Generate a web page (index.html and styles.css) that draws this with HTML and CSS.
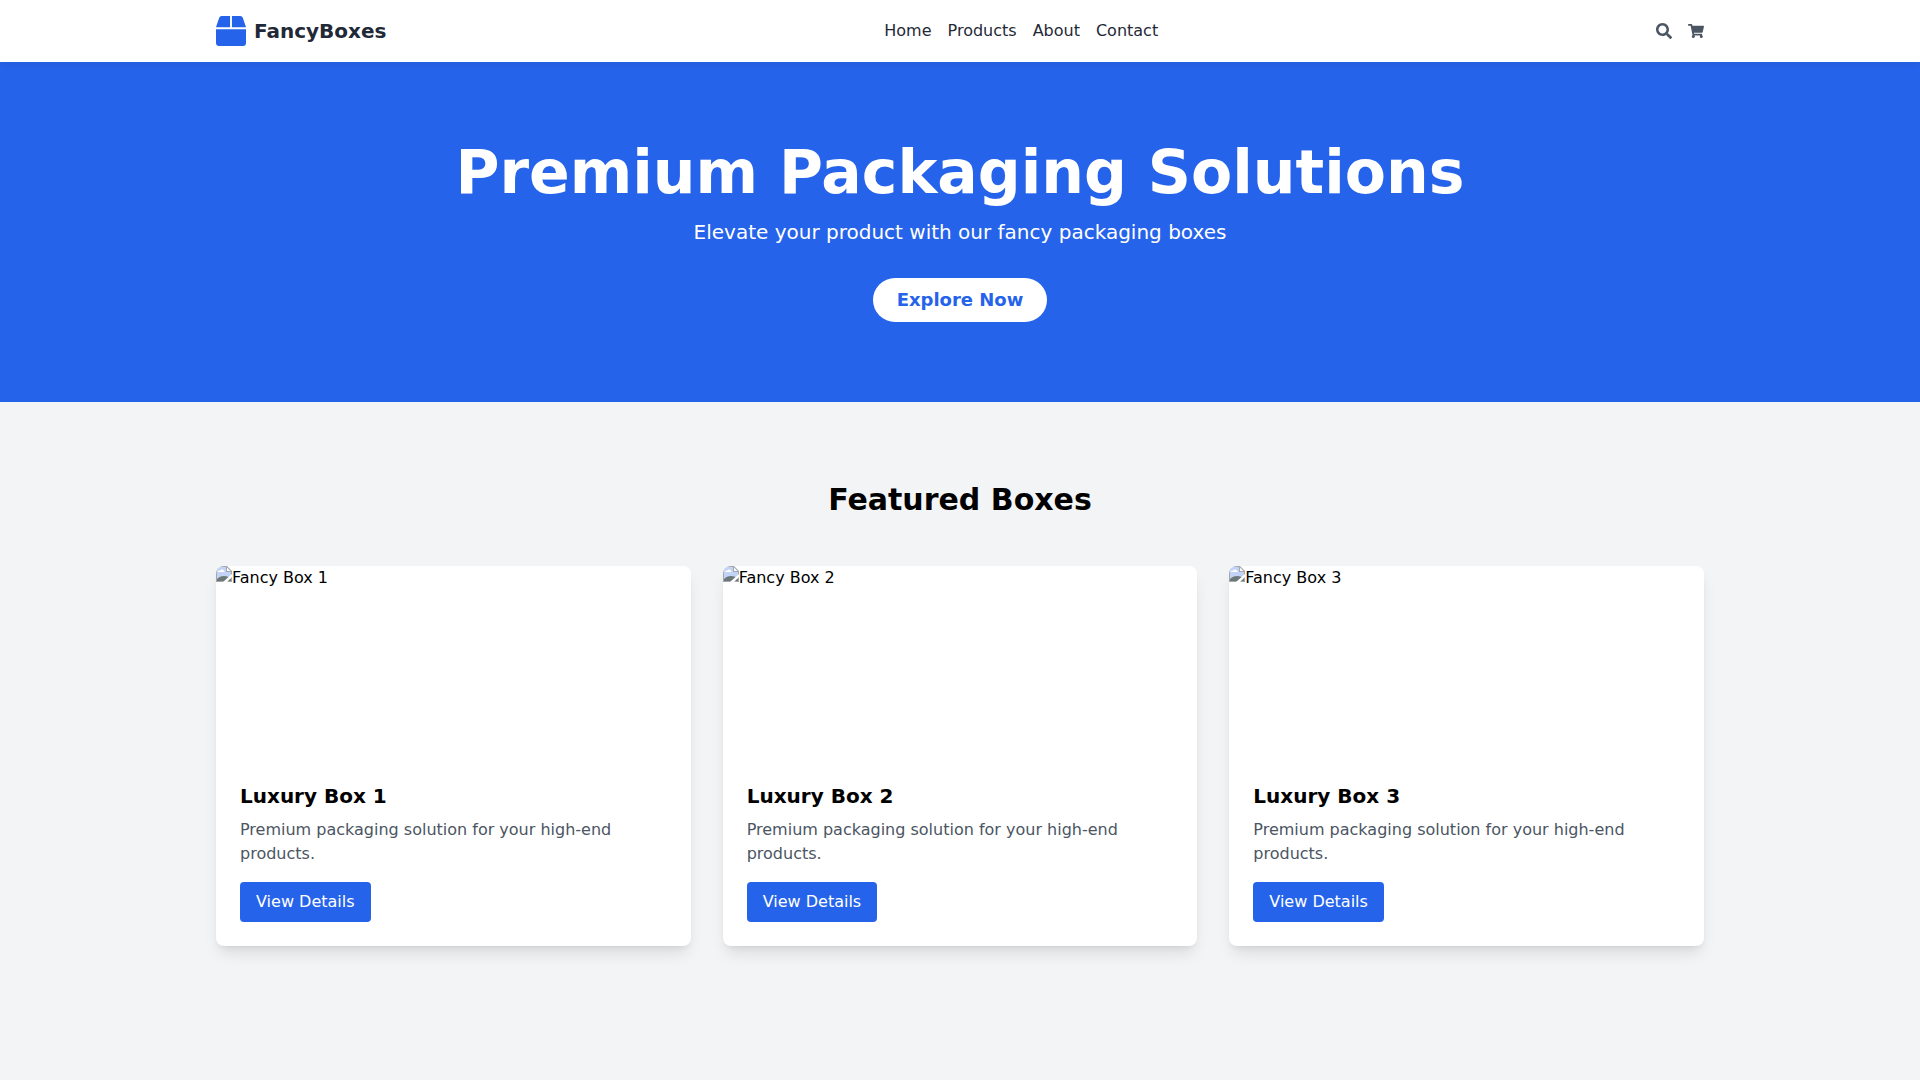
FILE: index.html
```html
<!DOCTYPE html>
<html lang="en">
<head>
  <meta charset="utf-8">
  <meta name="viewport" content="width=device-width, initial-scale=1">
  <title>FancyBoxes</title>
  <link rel="stylesheet" href="styles.css">
</head>
<body>
  <svg class="sprite" aria-hidden="true">
    <symbol id="missing" viewBox="0 0 16 16">
      <path fill="#a3a6aa" d="M0 0h11l5 5v11H0z"/>
      <path fill="#fff" d="M1 1h9v5h5v9H1z"/>
      <path fill="#c3d3f7" d="M1 1h9v5h5v9H1z"/>
      <path fill="#fff" d="M11 1.500V5h3.500z"/>
      <path fill="#fff" d="M2 6c0-1 1-2 2-1 1-2 3-2 4 0 1 0 1 1 0 1H2z"/>
      <path fill="#6c7778" d="M1 15v-2c2-2 4-3 7-3 3 0 5 1 7 3v2z"/>
      <path fill="#fff" d="M7 16l9-8v3l-5 5z"/>
    </symbol>
  </svg>

  <header class="header">
    <div class="container header-row">
      <a class="logo" href="#">
        <svg class="logo-icon" viewBox="0 0 512 512" aria-hidden="true"><path d="M509.500 184.600L458.900 32.800C452.400 13.200 434.100 0 413.400 0H272v192h238.700c-.4-2.500-.4-5-1.200-7.400zM240 0H98.600c-20.700 0-39 13.200-45.500 32.800L2.500 184.600c-.8 2.400-.8 4.900-1.200 7.400H240V0zM0 224v240c0 26.500 21.500 48 48 48h416c26.500 0 48-21.500 48-48V224H0z"/></svg>
        <span>FancyBoxes</span>
      </a>
      <nav class="nav" aria-label="Main">
        <a href="#">Home</a>
        <a href="#">Products</a>
        <a href="#">About</a>
        <a href="#">Contact</a>
      </nav>
      <div class="actions">
        <button class="icon-button" type="button" aria-label="Search"><svg viewBox="0 0 512 512"><path d="M505 442.700L405.300 343c-4.500-4.500-10.600-7-17-7H372c27.600-35.300 44-79.700 44-128C416 93.100 322.900 0 208 0S0 93.100 0 208s93.100 208 208 208c48.300 0 92.700-16.400 128-44v16.300c0 6.400 2.500 12.500 7 17l99.700 99.700c9.400 9.400 24.600 9.400 33.900 0l28.300-28.300c9.400-9.400 9.400-24.600.1-34zM208 336c-70.700 0-128-57.200-128-128 0-70.700 57.200-128 128-128 70.700 0 128 57.200 128 128 0 70.700-57.200 128-128 128z"/></svg></button>
        <button class="icon-button" type="button" aria-label="Cart"><svg viewBox="0 0 576 512"><path d="M528.120 301.319l47.273-208C578.806 78.301 567.391 64 551.990 64H159.208l-9.166-44.810C147.758 8.021 137.930 0 126.529 0H24C10.745 0 0 10.745 0 24v16c0 13.255 10.745 24 24 24h69.883l70.248 343.435C147.325 417.100 136 435.222 136 456c0 30.928 25.072 56 56 56s56-25.072 56-56c0-15.674-6.447-29.835-16.824-40h209.647C430.447 426.165 424 440.326 424 456c0 30.928 25.072 56 56 56s56-25.072 56-56c0-22.172-12.888-41.332-31.579-50.405l5.517-24.276c3.413-15.018-8.002-29.319-23.403-29.319H218.117l-6.545-32h293.145c11.206 0 20.920-7.754 23.403-18.681z"/></svg></button>
      </div>
    </div>
  </header>

  <main>
    <section class="hero">
      <div class="container">
        <h1>Premium Packaging Solutions</h1>
        <p>Elevate your product with our fancy packaging boxes</p>
        <button class="explore" type="button">Explore Now</button>
      </div>
    </section>

    <section class="featured">
      <div class="container">
        <h2>Featured Boxes</h2>
        <div class="grid">
          <article class="card">
            <div class="card-image"><svg aria-hidden="true"><use href="#missing"/></svg><span>Fancy Box 1</span></div>
            <div class="card-body">
              <h3>Luxury Box 1</h3>
              <p>Premium packaging solution for your high-end products.</p>
              <button class="details" type="button">View Details</button>
            </div>
          </article>
          <article class="card">
            <div class="card-image"><svg aria-hidden="true"><use href="#missing"/></svg><span>Fancy Box 2</span></div>
            <div class="card-body">
              <h3>Luxury Box 2</h3>
              <p>Premium packaging solution for your high-end products.</p>
              <button class="details" type="button">View Details</button>
            </div>
          </article>
          <article class="card">
            <div class="card-image"><svg aria-hidden="true"><use href="#missing"/></svg><span>Fancy Box 3</span></div>
            <div class="card-body">
              <h3>Luxury Box 3</h3>
              <p>Premium packaging solution for your high-end products.</p>
              <button class="details" type="button">View Details</button>
            </div>
          </article>
        </div>
      </div>
    </section>
  </main>
</body>
</html>
```
FILE: styles.css
```css
*, *::before, *::after {
  box-sizing: border-box;
}

body, h1, h2, h3, p {
  margin: 0;
}

body {
  min-height: 100vh;
  background: #f3f4f6;
  color: #000;
  font: 16px/24px "DejaVu Sans", sans-serif;
}

a {
  color: inherit;
  text-decoration: none;
}

button {
  border: 0;
  font: inherit;
  cursor: pointer;
}

svg {
  display: block;
  fill: currentColor;
}

.sprite {
  display: none;
}

.container {
  width: 100%;
  max-width: 1536px;
  margin: 0 auto;
  padding: 0 24px;
}

.header {
  position: relative;
  z-index: 1;
  padding: 16px 0;
  background: #fff;
  color: #1f2937;
  box-shadow: 0 4px 6px -1px rgba(0, 0, 0, 0.06);
}

.header-row {
  display: flex;
  flex-wrap: wrap;
  align-items: center;
  justify-content: space-between;
}

.logo {
  display: flex;
  align-items: center;
  gap: 8px;
  font-size: 20px;
  font-weight: 700;
  line-height: 28px;
}

.logo-icon {
  width: 30px;
  height: 30px;
  color: #2563eb;
}

.nav, .actions {
  display: flex;
  gap: 16px;
}

.icon-button {
  padding: 0;
  background: none;
  color: #4b5563;
}

.icon-button svg {
  width: 16px;
  height: 16px;
}

.hero {
  padding: 80px 0;
  background: #2563eb;
  color: #fff;
  text-align: center;
}

.hero h1 {
  margin-bottom: 16px;
  font-size: 60px;
  line-height: 60px;
}

.hero p {
  margin-bottom: 32px;
  font-size: 20px;
  line-height: 28px;
}

.explore {
  display: block;
  margin: 0 auto;
  padding: 8px 24px;
  border-radius: 9999px;
  background: #fff;
  color: #2563eb;
  font-size: 18px;
  font-weight: 700;
  line-height: 28px;
}

.featured {
  padding: 80px 0;
}

.featured h2 {
  margin-bottom: 48px;
  font-size: 30px;
  line-height: 36px;
  text-align: center;
}

.grid {
  display: grid;
  grid-template-columns: repeat(auto-fit, minmax(320px, 1fr));
  gap: 32px;
}

.card {
  overflow: hidden;
  border-radius: 8px;
  background: #fff;
  box-shadow: 0 10px 15px -3px rgba(0, 0, 0, 0.1), 0 4px 6px -4px rgba(0, 0, 0, 0.1);
}

.card-image {
  display: flex;
  align-items: flex-start;
  height: 192px;
}

.card-image svg {
  width: 16px;
  height: 16px;
}

.card-body {
  padding: 24px;
}

.card-body h3 {
  margin-bottom: 8px;
  font-size: 20px;
  line-height: 28px;
}

.card-body p {
  margin-bottom: 16px;
  color: #4b5563;
}

.details {
  display: block;
  padding: 8px 16px;
  border-radius: 4px;
  background: #2563eb;
  color: #fff;
}
```
